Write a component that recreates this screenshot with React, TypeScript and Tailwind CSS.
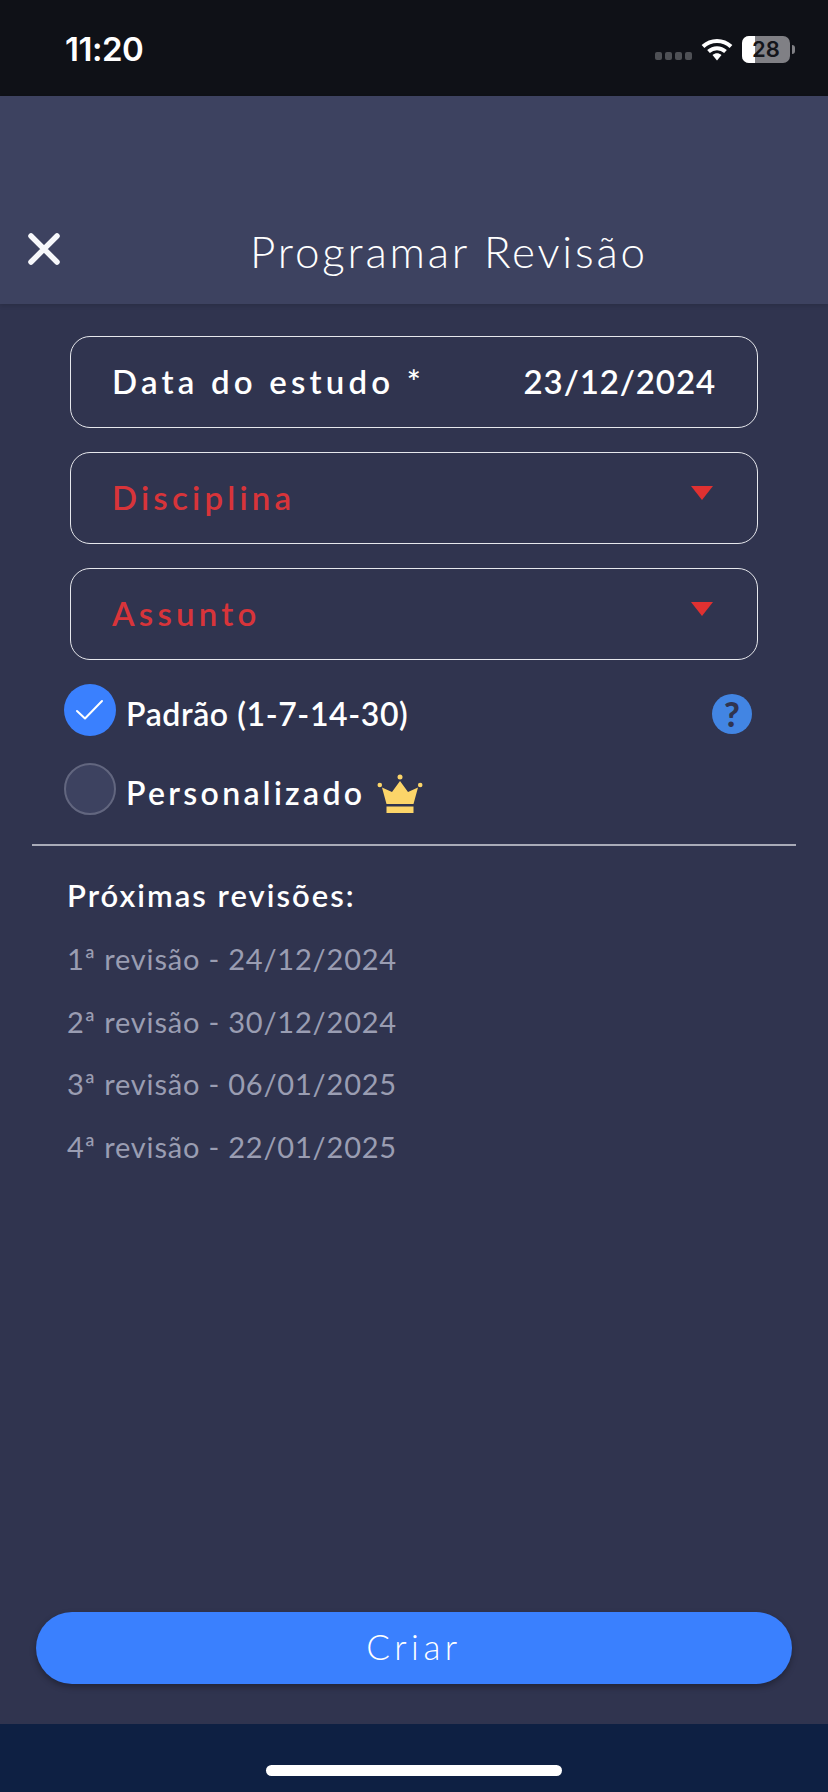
const reviews = [
  '1ª revisão - 24/12/2024',
  '2ª revisão - 30/12/2024',
  '3ª revisão - 06/01/2025',
  '4ª revisão - 22/01/2025',
]

function StatusBar() {
  return (
    <div className="flex h-24 shrink-0 items-center justify-between bg-[#0f1117] pl-[65px] pr-[33px] pt-[3px]">
      <span className="font-['Inter',sans-serif] text-[33px] font-semibold tracking-[-0.5px] text-white">11:20</span>
      <div className="flex items-center">
        <div className="mt-3 mr-[9px] flex gap-[3px]">
          <span className="h-2 w-[7px] rounded-[2px] bg-[#4e5055]" />
          <span className="h-2 w-[7px] rounded-[2px] bg-[#4e5055]" />
          <span className="h-2 w-[7px] rounded-[2px] bg-[#4e5055]" />
          <span className="h-2 w-[7px] rounded-[2px] bg-[#4e5055]" />
        </div>
        <svg width="32" height="24" viewBox="0 0 32 24" fill="none" className="mr-[9px]">
          <path d="M2 8.5C10 1 22 1 30 8.5" stroke="white" strokeWidth="4" />
          <path d="M7.5 13.5C12.5 9 19.5 9 24.5 13.5" stroke="white" strokeWidth="4" />
          <path d="M11.5 17C14.5 14.5 17.5 14.5 20.5 17L16 22.5Z" fill="white" />
        </svg>
        <div className="relative flex h-[27px] w-[48px] items-center justify-center overflow-hidden rounded-[7px] bg-[#808085]">
          <div className="absolute inset-y-0 left-0 w-[13px] bg-white" />
          <span className="relative font-['Inter',sans-serif] text-[22px] font-semibold text-[#14151a]">28</span>
        </div>
        <div className="ml-[2px] h-[9px] w-[3px] rounded-r-full bg-[#808085]" />
      </div>
    </div>
  )
}

function Field({ label, red, value }: { label: string; red?: boolean; value?: string }) {
  return (
    <div className="flex h-[92px] items-center justify-between rounded-[20px] border border-[#e6e7ec] pl-[41px] pr-[41px]">
      <span className={`text-[33px] font-semibold tracking-[4.2px] ${red ? 'text-[#d8343a]' : 'text-white'}`}>{label}</span>
      {value && <span className="text-[33px] font-semibold tracking-[0.9px] text-white">{value}</span>}
      {red && (
        <svg width="24" height="22" viewBox="0 0 24 22" className="-mt-2 mr-[2px]">
          <path d="M1 3H23L12 17Z" fill="#e03131" />
        </svg>
      )}
    </div>
  )
}

function Crown() {
  return (
    <svg width="46" height="40" viewBox="0 0 46 40" fill="#fcd569">
      <path d="M23 7L31 18L41 13.5L36.5 30H9.5L5 13.5L15 18Z" />
      <rect x="9.5" y="32.5" width="27" height="6.5" />
      <circle cx="23" cy="3" r="2.5" />
      <circle cx="2.8" cy="11" r="2.3" />
      <circle cx="43.2" cy="11" r="2.3" />
    </svg>
  )
}

export default function App() {
  return (
    <div className="flex h-[1792px] w-[828px] flex-col overflow-hidden bg-[#30344f] font-['Lato',sans-serif]">
      <StatusBar />

      {/* Header */}
      <div className="relative flex h-[208px] shrink-0 items-end justify-center bg-[#3d4260] pb-[26px] pl-[70px] shadow-[0_2px_4px_rgba(0,0,0,0.12)]">
        <svg width="34" height="34" viewBox="0 0 34 34" className="absolute bottom-[38px] left-[27px]">
          <path d="M4 4L30 30M30 4L4 30" stroke="#f7f8fb" strokeWidth="5.5" strokeLinecap="round" />
        </svg>
        <h1 className="text-[44px] leading-[54px] font-light tracking-[2.8px] text-white">Programar Revisão</h1>
      </div>

      {/* Form */}
      <div className="flex flex-1 flex-col">
        <div className="mt-8 ml-[70px] mr-[70px] flex flex-col gap-6">
          <Field label="Data do estudo *" value="23/12/2024" />
          <Field label="Disciplina" red />
          <Field label="Assunto" red />
        </div>

        <div className="mt-[24px] flex items-center pl-16 pr-[76px]">
          <div className="flex h-[52px] w-[52px] items-center justify-center rounded-full bg-[#3a80fe]">
            <svg width="30" height="24" viewBox="0 0 30 24" fill="none">
              <path d="M2 13L10 20.5L27 3" stroke="white" strokeWidth="2" strokeLinecap="round" strokeLinejoin="round" />
            </svg>
          </div>
          <span className="ml-[10px] flex-1 pt-[7px] text-[32px] leading-10 font-semibold tracking-[0.6px] text-white">Padrão (1-7-14-30)</span>
          <div className="mt-[7px] flex h-10 w-10 items-center justify-center rounded-full bg-[#4285e3] text-[34px] leading-none font-black text-[#30344f]">
            ?
          </div>
        </div>

        <div className="mt-[27px] flex items-center pl-16">
          <div className="h-[52px] w-[52px] rounded-full border-2 border-[#62667f] bg-[#3d4260]" />
          <span className="ml-[10px] pt-[7px] text-[32px] leading-10 font-semibold tracking-[3.3px] text-white">Personalizado</span>
          <div className="mt-[10px] ml-3">
            <Crown />
          </div>
        </div>

        <div className="mx-8 mt-[29px] h-[2px] bg-[#a9abb8]" />

        <div className="mt-[29px] pl-[67px]">
          <p className="text-[31px] leading-10 font-semibold tracking-[2px] text-white">Próximas revisões:</p>
          <ul className="mt-[24px] flex flex-col gap-[22.5px]">
            {reviews.map((r) => (
              <li key={r} className="text-[29px] leading-10 font-normal tracking-[0.8px] text-[#9a9db2]">
                {r}
              </li>
            ))}
          </ul>
        </div>

        <div className="mx-9 mt-auto mb-[40px] flex h-[72px] items-center justify-center rounded-[36px] bg-[#3a80fe] pb-1 text-[35px] font-light tracking-[4.5px] text-white shadow-[0_3px_6px_rgba(0,0,0,0.3)]">
          Criar
        </div>
      </div>

      {/* Home indicator */}
      <div className="flex h-[68px] shrink-0 justify-center bg-[#0e2043] pt-[41px]">
        <div className="h-[11px] w-[296px] rounded-full bg-white" />
      </div>
    </div>
  )
}
